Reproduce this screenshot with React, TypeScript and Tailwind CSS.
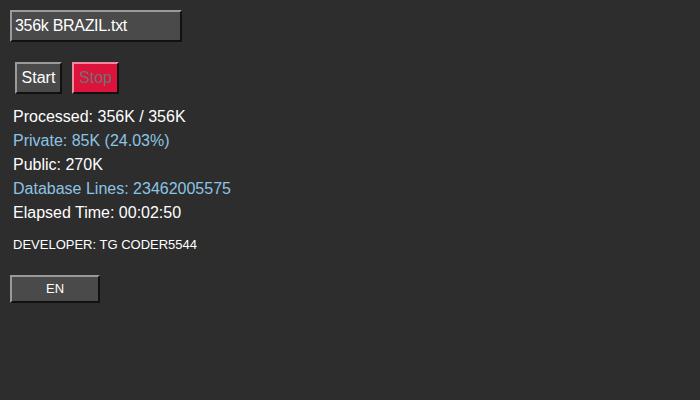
import React from "react";

const App = () => {
  return (
    <div
      className="w-[700px] h-[400px] bg-[#2d2d2d] text-white overflow-hidden"
      style={{ fontFamily: '"Liberation Sans", Arial, sans-serif' }}
    >
      <div className="pt-[10px] pl-[10px]">
        <div className="w-[172px] h-[32px] bg-[#4a4a4a] border-2 border-t-[#9a9a9a] border-l-[#9a9a9a] border-b-[#111] border-r-[#111] flex items-center pl-[3px] text-[16px] tracking-[-0.3px]">
          356k BRAZIL.txt
        </div>
      </div>

      <div className="flex gap-[10px] pl-[15px] mt-[20px]">
        <button className="w-[47px] h-[32px] bg-[#4a4a4a] border-2 border-t-[#9a9a9a] border-l-[#9a9a9a] border-b-[#111] border-r-[#111] text-[16px] text-white flex items-center justify-center">
          Start
        </button>
        <button className="w-[47px] h-[32px] bg-[#dc143c] border-2 border-t-[#f08a9e] border-l-[#f08a9e] border-b-[#111] border-r-[#111] text-[16px] text-[#707070] flex items-center justify-center">
          Stop
        </button>
      </div>

      <div className="pl-[13px] mt-[11px] text-[16px] leading-[24px]">
        <p className="text-white">Processed: 356K / 356K</p>
        <p className="text-[#8cc4e4]">Private: 85K (24.03%)</p>
        <p className="text-white">Public: 270K</p>
        <p className="text-[#8cc4e4]">Database Lines: 23462005575</p>
        <p className="text-white">Elapsed Time: 00:02:50</p>
      </div>

      <p className="pl-[13px] mt-[12px] text-[13px] leading-[16px] text-white">
        DEVELOPER: TG CODER5544
      </p>

      <div className="pl-[10px] mt-[22px]">
        <button className="w-[90px] h-[28px] bg-[#4a4a4a] border-2 border-t-[#9a9a9a] border-l-[#9a9a9a] border-b-[#111] border-r-[#111] text-[13px] text-white flex items-center justify-center">
          EN
        </button>
      </div>
    </div>
  );
};

export default App;
